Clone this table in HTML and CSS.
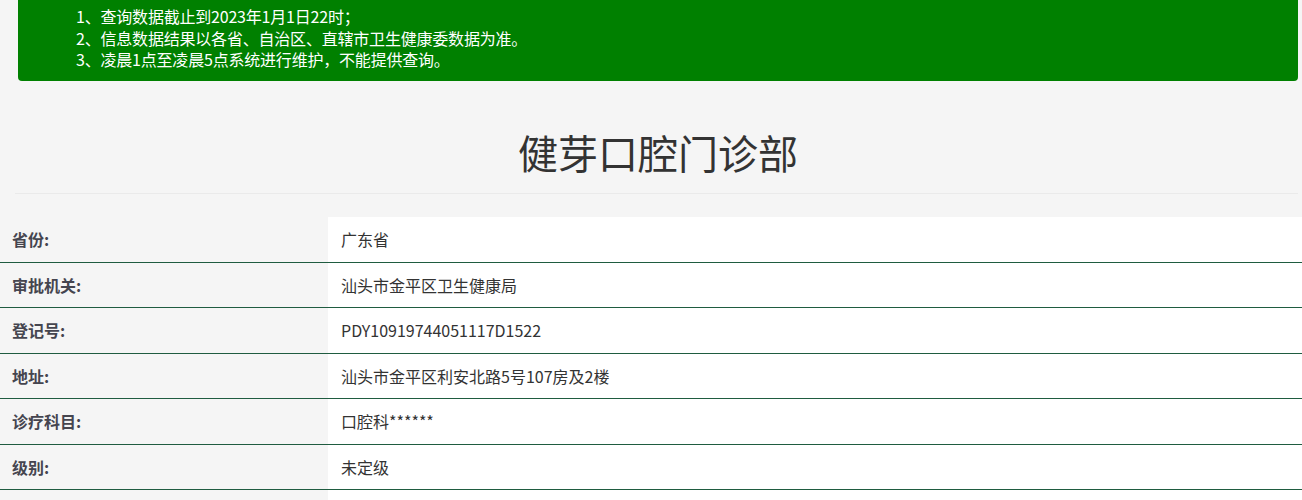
FILE: index.html
```html
<!DOCTYPE html>
<html lang="zh-CN">
<head>
<meta charset="utf-8">
<title>健芽口腔门诊部</title>
<link rel="stylesheet" href="styles.css">
</head>
<body>
<div class="notice">
  <p>1、查询数据截止到2023年1月1日22时；</p>
  <p>2、信息数据结果以各省、自治区、直辖市卫生健康委数据为准。</p>
  <p>3、凌晨1点至凌晨5点系统进行维护，不能提供查询。</p>
</div>
<div class="header">
  <h1 class="title">健芽口腔门诊部</h1>
</div>
<table class="info">
  <tr><th>省份:</th><td>广东省</td></tr>
  <tr><th>审批机关:</th><td>汕头市金平区卫生健康局</td></tr>
  <tr><th>登记号:</th><td>PDY10919744051117D1522</td></tr>
  <tr><th>地址:</th><td>汕头市金平区利安北路5号107房及2楼</td></tr>
  <tr><th>诊疗科目:</th><td>口腔科******</td></tr>
  <tr><th>级别:</th><td>未定级</td></tr>
  <tr><th>&nbsp;</th><td>&nbsp;</td></tr>
</table>
</body>
</html>
```
FILE: styles.css
```css
html, body {
  margin: 0;
  padding: 0;
  overflow: hidden;
  background: #f5f5f5;
  font-family: "Noto Sans CJK SC", "Noto Sans", sans-serif;
}

.notice {
  margin: 0 4px 0 18px;
  background: #008000;
  color: #ffffff;
  padding: 6px 0 10.5px 58px;
  border-radius: 0 0 4px 4px;
  font-size: 16px;
  line-height: 21.5px;
  letter-spacing: -0.2px;
}

.notice p {
  margin: 0;
}

.header {
  margin: 0 4px 0 15px;
  border-bottom: 1px solid #eaeaea;
  padding-bottom: 13.5px;
  margin-bottom: 23px;
}

.title {
  margin: 42.5px 0 0 0;
  padding-left: 3px;
  text-align: center;
  font-size: 40px;
  line-height: 56px;
  font-weight: normal;
  color: #333333;
}

.info {
  width: 100%;
  border-collapse: collapse;
  font-size: 16px;
}

.info th,
.info td {
  padding: 12px 0;
  line-height: 20.5px;
  text-align: left;
  border-bottom: 1px solid #1f5c40;
}

.info th {
  width: 316px;
  padding-left: 12px;
  font-weight: bold;
  color: #45454f;
  background: #f5f5f5;
}

.info td {
  padding-left: 13px;
  color: #333333;
  background: #ffffff;
}
```
